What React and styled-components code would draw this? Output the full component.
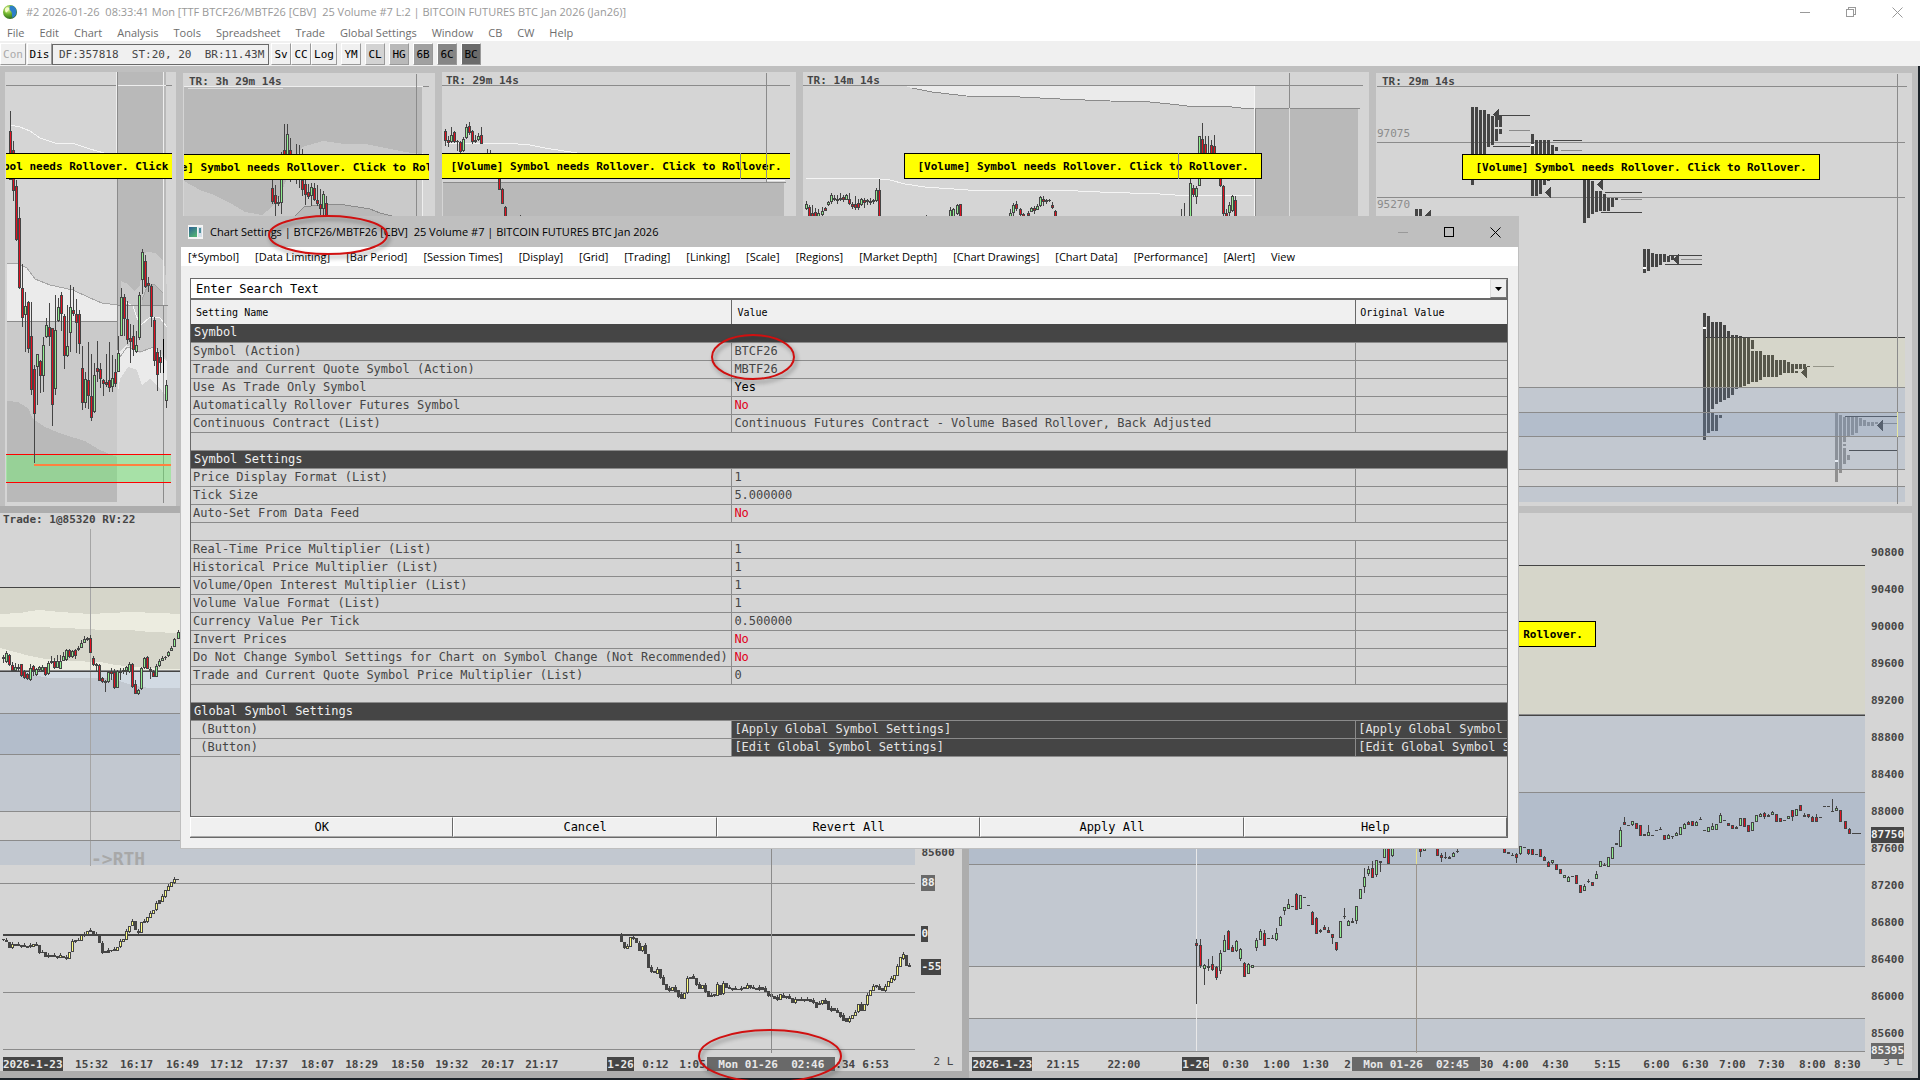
import React, { Fragment } from 'react'
import styled, { createGlobalStyle, css } from 'styled-components'

const colors = {
  panel: '#d5d5d5',
  frame: '#bfbfbf',
  frameActive: '#adadad',
  shade: '#b9b9b9',
  mid: '#cacaca',
  light: '#ebebeb',
  line: '#8b8b8b',
  ink: '#454545',
  tag: '#696969',
  face: '#f0f0f0',
  up: '#90ee90',
  down: '#e01020',
  study: '#ffff80',
  khaki: 'rgba(221, 221, 121, 0.12)',
  blue: 'rgba(118, 148, 188, 0.2)',
  blueDeep: 'rgba(120, 148, 187, 0.36)'
}

const sans = '"Open Sans", "Noto Sans", sans-serif'
const mono = '"DejaVu Sans Mono", "Liberation Mono", monospace'

const GlobalStyle = createGlobalStyle`
  * {
    box-sizing: border-box;
  }

  body {
    background: #1c2329;
    margin: 0;
    overflow: hidden;
  }

  button, input {
    border-radius: 0;
    margin: 0;
    padding: 0;
  }
`

const Page = styled.div`
  display: flex;
  flex-direction: column;
  font-family: ${mono};
  font-size: 12px;
  height: 100vh;
  position: relative;
`

const TitleBar = styled.header`
  align-items: center;
  background: white;
  color: #999;
  display: flex;
  flex: none;
  font-family: ${sans};
  height: 24px;
  padding-left: 2px;
  white-space: pre;
`

const Title = styled.h1`
  flex: 1;
  font-size: 11px;
  font-weight: normal;
  line-height: 16px;
  margin: 0 0 0 8px;
`

const WindowButton = styled.button`
  align-items: center;
  background: none;
  border: 0;
  color: ${props => props.$color || '#999'};
  display: flex;
  height: 20px;
  justify-content: center;
  width: 46px;
`

const Menu = styled.nav`
  align-items: center;
  background: white;
  display: flex;
  flex: none;
  gap: ${props => props.$gap}px;
  height: ${props => props.$height}px;
  padding-left: 7px;
`

const MenuItem = styled.button`
  background: none;
  border: 0;
  color: ${props => props.$color};
  font-family: ${sans};
  font-size: 11px;
  line-height: 16px;
  white-space: nowrap;
`

const Toolbar = styled.div`
  align-items: center;
  background: ${colors.face};
  display: flex;
  flex: none;
  height: 25px;
  padding-top: 1px;
`

const ToolButton = styled.button`
  background: ${props => props.$bg || colors.face};
  border: 1px solid;
  border-color: white #999 #999 white;
  color: black;
  flex: none;
  font-family: ${mono};
  font-size: 11px;
  height: 22px;
  margin-right: ${props => props.$gap || 0}px;
  text-align: center;
  width: ${props => props.$width}px;

  &:disabled {
    color: #aaa;
  }
`

const Status = styled.output`
  border: 1px solid ${colors.tag};
  color: ${colors.ink};
  font-size: 11px;
  height: 21px;
  line-height: 19px;
  margin-right: 2px;
  padding-left: 6px;
  white-space: pre;
  width: 217px;
`

const Workspace = styled.main`
  background: ${colors.frame};
  border-bottom: 2px solid #1c2329;
  border-right: 2px solid #1c2329;
  display: flex;
  flex: 1;
  flex-direction: column;
  min-height: 0;
  position: relative;
`

const TopRow = styled.div`
  display: flex;
  flex: 434 1 0;
  gap: 7px;
  min-height: 0;
  padding: 6px 6px 0 5px;
`

const BottomRow = styled.div`
  display: flex;
  flex: 572 1 0;
  min-height: 0;
`

const layered = css`
  display: grid;
  grid-template-columns: minmax(0, 1fr);
  grid-template-rows: minmax(0, 1fr);
  min-width: 0;
  overflow: hidden;

  > * {
    grid-area: 1 / 1;
  }
`

const ChartPanel = styled.section`
  ${layered}
  background: ${colors.panel};
  flex: ${props => props.$grow} 1 0;
  margin-top: ${props => (props.$inset ? 1 : 0)}px;
`

const Plot = styled.svg`
  display: block;
  height: 100%;
  min-height: 0;
  pointer-events: none;
  width: 100%;
`

const TimeRemaining = styled.div`
  align-self: start;
  color: ${colors.ink};
  font-size: 11px;
  font-weight: bold;
  line-height: 17px;
  padding-left: ${props => props.$pad}px;
  white-space: pre;
`

const BannerRow = styled.div`
  align-self: start;
  display: flex;
  justify-content: center;
  margin: ${props => props.$top}px ${props => props.$right}px 0 ${props => props.$left || 0}px;
  overflow: hidden;
`

const Banner = styled.button`
  background: #ff0;
  border: 1px solid black;
  color: black;
  flex: none;
  font-family: ${mono};
  font-size: 11px;
  font-weight: bold;
  height: 26px;
  padding: 0 12px;
  white-space: nowrap;
`

const Trading = styled.section`
  background: ${colors.panel};
  border-bottom: ${props => props.$bottom}px solid ${props => props.$frame};
  border-right: ${props => props.$side}px solid ${props => props.$frame};
  border-top: 7px solid ${props => props.$frame};
  display: grid;
  flex: ${props => props.$grow} 1 0;
  grid-template-columns: minmax(0, 1fr) 47px;
  grid-template-rows: minmax(0, 1fr) 14px;
  min-width: 0;
`

const PlotArea = styled.div`
  ${layered}
`

const PriceAxis = styled.div`
  color: ${colors.ink};
  display: flex;
  flex-direction: column;
  font-size: 11px;
  font-weight: bold;
  padding: 21px 0 5px 6px;
  position: relative;
`

const Price = styled.span`
  align-items: center;
  display: flex;
  flex: 1;
`

const AxisTag = styled.span`
  background: ${props => props.$bg};
  color: ${props => props.$color || '#f0f0f0'};
  font-size: 11px;
  font-weight: bold;
  left: 6px;
  line-height: 16px;
  position: absolute;
  top: ${props => props.$top}%;
`

const TimeAxis = styled.div`
  color: ${colors.ink};
  display: flex;
  font-size: 11px;
  font-weight: bold;
  line-height: 15px;
  padding-left: 3px;
`

const Slot = styled.span`
  flex: ${props => props.$grow} 1 0;
  min-width: 0;
  overflow: hidden;
  white-space: pre;
`

const DateTag = styled.span`
  background: ${colors.ink};
  color: #e8e8e8;
  display: inline-block;
`

const CursorTag = styled(Slot)`
  background: ${colors.tag};
  color: #e8e8e8;
  text-align: center;
`

const AxisCorner = styled.span`
  color: ${colors.ink};
  font-size: 11px;
  line-height: 10px;
  padding-right: 9px;
  text-align: right;
`

const Dialog = styled.section`
  background: ${colors.face};
  border: 1px solid ${colors.frame};
  display: flex;
  flex-direction: column;
  height: 633px;
  left: 180px;
  position: absolute;
  right: 399px;
  top: 150px;
`

const DialogTitle = styled.div`
  align-items: center;
  background: ${colors.frame};
  display: flex;
  flex: none;
  font-family: ${sans};
  height: 30px;
  padding-left: 7px;
`

const DialogName = styled.h2`
  flex: 1;
  font-size: 11px;
  font-weight: normal;
  line-height: 16px;
  margin: 0 0 0 7px;
  white-space: pre;
`

const DialogBody = styled.div`
  display: flex;
  flex: 1;
  flex-direction: column;
  min-height: 0;
  padding: 12px 10px 10px 9px;
`

const Search = styled.div`
  background: white;
  border: 1px solid ${colors.tag};
  display: flex;
  flex: none;
  height: 21px;
`

const SearchInput = styled.input`
  border: 0;
  color: black;
  flex: 1;
  font-family: ${mono};
  font-size: 12px;
  min-width: 0;
  outline: 0;
  padding-left: 5px;

  &::placeholder {
    color: black;
    opacity: 1;
  }
`

const DropButton = styled.button`
  align-items: center;
  background: ${colors.face};
  border: 1px solid;
  border-color: #ddd #777 #777 #ddd;
  display: flex;
  justify-content: center;
  width: 17px;
`

const TableFrame = styled.div`
  background: ${colors.panel};
  border: 1px solid ${colors.tag};
  flex: 1;
  min-height: 0;
  overflow: hidden;
`

const Table = styled.table`
  border-collapse: collapse;
  color: ${colors.ink};
  font-size: 12px;
  table-layout: fixed;
  width: 100%;
`

const HeadCell = styled.th`
  background: ${colors.face};
  border-right: 1px solid ${colors.tag};
  color: black;
  font-size: 10px;
  font-weight: normal;
  height: 24px;
  padding: 0 5px;
  text-align: left;
  width: ${props => props.$width};

  &:last-child {
    border-right: 0;
    padding-left: 4px;
  }
`

const Cell = styled.td`
  border: solid ${colors.line};
  border-width: 1px 1px 1px 0;
  color: ${props => props.$color || 'inherit'};
  height: 18px;
  line-height: 17px;
  overflow: hidden;
  padding: 0 0 0 2px;
  white-space: pre;

  &:last-child {
    border-right: 0;
  }

  ${props =>
    props.$dark &&
    css`
      background: ${colors.ink};
      color: #e4e4e4;
    `}
`

const SectionCell = styled.th`
  background: ${colors.ink};
  color: #f0f0f0;
  font-weight: normal;
  height: 18px;
  line-height: 17px;
  padding: 0 0 0 3px;
  text-align: left;
`

const CellButton = styled.button`
  background: none;
  border: 0;
  color: inherit;
  display: block;
  font-family: ${mono};
  font-size: 12px;
  line-height: 17px;
`

const Actions = styled.div`
  border-bottom: 1px solid ${colors.tag};
  border-right: 1px solid ${colors.tag};
  display: flex;
  flex: none;
  height: 21px;
`

const ActionButton = styled.button`
  background: ${colors.face};
  border: 1px solid;
  border-color: white ${colors.tag} #aaa white;
  color: black;
  flex: 1;
  font-family: ${mono};
  font-size: 12px;
`

const Marks = styled.svg`
  filter: drop-shadow(2px 3px 2px rgba(0, 0, 0, 0.4));
  height: 100%;
  inset: 0;
  overflow: hidden;
  pointer-events: none;
  position: absolute;
  width: 100%;
`

const ProfilePrices = styled.div`
  align-self: start;
  color: ${colors.line};
  display: grid;
  font-size: 11px;
  gap: 55px;
  line-height: 16px;
  padding: 53px 0 0 1px;
`

const TradeInfo = styled(TimeRemaining)`
  line-height: 14px;
  padding-left: 3px;
`

const Watermark = styled.span`
  align-self: end;
  color: #a8a8a8;
  font-size: 18px;
  font-weight: bold;
  line-height: 18px;
  margin: 0 0 189px 91px;
`

const Candle = ({ x, hi, top, bot, lo, fill }) => (
  <g>
    <rect x={x} y={hi} width='1' height={Math.max(lo - hi, 1)} fill={colors.ink} />
    <rect x={x - 1} y={top} width='3' height={Math.max(bot - top, 1)} fill={colors.ink} />
    {bot - top > 2 && <rect x={x} y={top + 1} width='1' height={bot - top - 2} fill={fill} />}
  </g>
)

// rows are [x, high, body top, body bottom, low, rising]
const Candles = ({ data }) =>
  data.map(([x, hi, top, bot, lo, rising]) => (
    <Candle
      key={x}
      x={x}
      hi={hi}
      top={top}
      bot={bot}
      lo={lo}
      fill={rising ? colors.up : colors.down}
    />
  ))

// rows are [x, top, bottom, rising]
const StudyBars = ({ data }) =>
  data.map(([x, top, bot, rising], i) => (
    <Candle
      key={x}
      x={x}
      hi={i % 2 ? top - 2 : top}
      top={top}
      bot={bot}
      lo={i % 3 ? bot : bot + 1}
      fill={rising ? colors.study : colors.ink}
    />
  ))

// rows are [x, top, bottom]
const Profile = ({ data, fill = colors.ink }) =>
  data.map(([x, top, bot]) => (
    <rect key={x + '-' + top} x={x} y={top} width='3' height={bot - top} fill={fill} />
  ))

const Arrow = ({ x, y, fill = colors.ink }) => (
  <path d={`M${x} ${y}l6 -7v13z`} fill={fill} />
)

const Rule = ({ y, from, to, color = colors.line, weight = 1 }) => (
  <rect x={from} y={y} width={to - from} height={weight} fill={color} />
)

const Cross = ({ x, from, to, color = colors.line }) => (
  <rect x={x} y={from} width='1' height={to - from} fill={color} />
)

const Band = ({ x, y, width, height, fill }) => (
  <rect x={x} y={y} width={width} height={height} fill={fill} />
)

const Drawing = ({ box, children }) => (
  <Plot viewBox={box} preserveAspectRatio='none' shapeRendering='crispEdges' aria-hidden='true'>
    {children}
  </Plot>
)

const dailyCandles = [
  [10, 111, 131, 180, 180, 0], [13, 141, 150, 191, 201, 0], [16, 180, 186, 240, 241, 0],
  [19, 207, 218, 288, 289, 0], [22, 264, 288, 318, 327, 0], [25, 292, 306, 315, 352, 1],
  [28, 301, 302, 349, 353, 0], [31, 302, 336, 390, 395, 0], [34, 365, 369, 414, 463, 0],
  [37, 354, 354, 367, 405, 1], [40, 360, 361, 376, 393, 0], [43, 337, 345, 376, 392, 1],
  [46, 318, 325, 337, 338, 1], [49, 303, 327, 337, 346, 0], [52, 328, 328, 405, 426, 0],
  [55, 295, 330, 389, 395, 1], [58, 298, 307, 321, 322, 1], [61, 292, 295, 314, 331, 0],
  [64, 314, 316, 356, 369, 0], [67, 305, 346, 356, 357, 1], [70, 285, 307, 333, 352, 1],
  [73, 287, 310, 314, 316, 0], [76, 299, 314, 323, 353, 0], [79, 310, 314, 344, 354, 0],
  [82, 346, 368, 403, 410, 0], [85, 372, 379, 403, 408, 1], [88, 342, 380, 396, 409, 0],
  [91, 354, 396, 418, 421, 0], [94, 363, 375, 412, 413, 1], [97, 341, 368, 372, 382, 0],
  [100, 363, 369, 379, 388, 0], [103, 379, 380, 384, 396, 0], [106, 354, 382, 385, 387, 0],
  [109, 342, 380, 388, 392, 0], [112, 355, 378, 387, 392, 1], [115, 359, 372, 384, 387, 0],
  [118, 336, 353, 372, 372, 1], [121, 288, 297, 336, 336, 1], [124, 294, 297, 319, 336, 0],
  [127, 301, 319, 340, 344, 0], [130, 324, 338, 342, 363, 0], [133, 325, 336, 350, 356, 0],
  [136, 331, 345, 352, 353, 1], [139, 292, 295, 338, 340, 1], [142, 249, 252, 280, 294, 1],
  [145, 255, 261, 287, 288, 0], [148, 277, 283, 286, 292, 0], [151, 284, 286, 317, 327, 0],
  [154, 317, 320, 361, 366, 0], [157, 348, 352, 375, 391, 0], [160, 350, 357, 363, 373, 0],
  [166, 380, 385, 401, 408, 1]
]

const fourHourCandles = [
  [272, 180, 188, 202, 204, 0], [275, 185, 195, 204, 216, 0], [278, 196, 202, 204, 206, 0],
  [281, 152, 160, 203, 214, 1], [284, 124, 150, 180, 180, 0], [287, 124, 134, 160, 180, 1],
  [290, 138, 150, 170, 182, 0], [296, 144, 156, 160, 184, 0], [299, 145, 156, 180, 188, 1],
  [302, 149, 180, 190, 196, 0], [305, 180, 184, 195, 205, 0], [308, 184, 192, 197, 199, 0],
  [311, 183, 187, 196, 206, 1], [314, 183, 188, 200, 201, 0], [317, 185, 200, 204, 206, 0],
  [320, 189, 204, 209, 215, 0], [323, 191, 194, 209, 216, 1], [326, 196, 203, 217, 217, 0]
]

const halfHourCandles = [
  [445, 129, 131, 141, 146, 0], [448, 136, 140, 143, 147, 0], [451, 127, 135, 142, 143, 1],
  [454, 131, 132, 142, 143, 0], [457, 140, 141, 142, 151, 0], [460, 141, 142, 152, 154, 0],
  [463, 137, 139, 151, 152, 1], [466, 124, 127, 138, 139, 1], [469, 122, 126, 133, 135, 0],
  [472, 130, 131, 142, 144, 0], [475, 135, 140, 142, 143, 0], [478, 133, 136, 140, 141, 1],
  [481, 127, 135, 144, 144, 0], [487, 149, 154, 158, 160, 0], [490, 150, 154, 160, 160, 0],
  [499, 175, 178, 190, 190, 0], [502, 188, 189, 204, 204, 0], [505, 206, 207, 217, 217, 0],
  [520, 215, 216, 217, 217, 0]
]

const quarterCandles = [
  [806, 201, 204, 209, 210, 1], [809, 205, 207, 217, 217, 0], [812, 205, 213, 217, 217, 0],
  [815, 208, 212, 217, 217, 0], [818, 209, 213, 217, 217, 1], [822, 207, 211, 215, 216, 1],
  [825, 207, 208, 211, 211, 0], [828, 201, 202, 205, 206, 1], [831, 193, 195, 202, 204, 1],
  [834, 195, 198, 200, 201, 0], [837, 195, 199, 201, 204, 1], [840, 193, 198, 200, 201, 0],
  [843, 195, 197, 200, 202, 0], [846, 194, 195, 200, 200, 1], [849, 193, 199, 204, 205, 0],
  [852, 202, 204, 207, 209, 0], [855, 196, 204, 208, 210, 0], [858, 199, 203, 208, 210, 0],
  [861, 198, 199, 205, 206, 1], [864, 198, 200, 203, 208, 0], [867, 199, 200, 202, 205, 1],
  [870, 198, 201, 203, 205, 0], [873, 199, 200, 202, 204, 1], [876, 188, 190, 201, 202, 1],
  [879, 179, 190, 217, 217, 0], [926, 215, 216, 217, 217, 0], [950, 207, 210, 217, 217, 1],
  [953, 208, 209, 217, 217, 1], [957, 204, 205, 214, 215, 1], [960, 204, 204, 217, 217, 0],
  [1010, 209, 213, 217, 217, 1], [1013, 203, 205, 213, 217, 1], [1016, 201, 204, 209, 211, 0],
  [1020, 208, 209, 215, 217, 0], [1023, 213, 214, 217, 217, 0], [1028, 211, 213, 216, 217, 0],
  [1031, 207, 208, 212, 212, 1], [1034, 206, 208, 211, 214, 0], [1037, 204, 206, 210, 210, 1],
  [1040, 196, 197, 206, 207, 1], [1043, 196, 199, 202, 206, 0], [1046, 199, 200, 202, 204, 1],
  [1049, 199, 200, 201, 202, 0], [1052, 202, 205, 208, 209, 0], [1055, 210, 211, 217, 217, 0],
  [1181, 209, 217, 217, 217, 0], [1184, 203, 217, 217, 217, 0], [1190, 175, 183, 217, 217, 1],
  [1193, 185, 188, 195, 197, 0], [1196, 186, 188, 197, 204, 1], [1199, 136, 136, 186, 186, 1],
  [1202, 123, 139, 160, 162, 0], [1205, 136, 144, 160, 162, 0], [1208, 136, 153, 160, 164, 1],
  [1211, 140, 145, 156, 160, 0], [1214, 135, 146, 160, 164, 0], [1220, 175, 178, 186, 187, 0],
  [1223, 185, 186, 214, 217, 0], [1226, 209, 213, 217, 217, 0], [1229, 202, 205, 213, 217, 1],
  [1232, 195, 196, 211, 212, 1], [1235, 196, 200, 217, 217, 0]
]

const profiles = [
  [1471, 107, 185], [1475, 107, 154], [1479, 110, 154], [1483, 110, 154], [1487, 114, 147],
  [1491, 116, 145], [1495, 117, 127], [1495, 129, 141], [1499, 115, 127], [1499, 129, 134],
  [1531, 134, 196], [1535, 140, 196], [1539, 140, 194], [1543, 140, 185], [1547, 140, 181],
  [1551, 145, 155], [1555, 147, 151], [1583, 180, 223], [1587, 180, 218], [1591, 181, 214],
  [1595, 191, 212], [1599, 191, 211], [1603, 194, 211], [1607, 198, 211], [1611, 198, 207],
  [1615, 198, 200], [1415, 209, 217], [1419, 209, 217], [1643, 249, 273], [1647, 249, 271],
  [1651, 253, 267], [1655, 254, 267], [1659, 254, 265], [1663, 254, 262], [1667, 256, 262],
  [1671, 256, 260], [1703, 313, 440], [1707, 316, 433], [1711, 322, 409], [1711, 413, 431],
  [1715, 322, 404], [1715, 415, 431], [1719, 322, 402], [1719, 415, 418], [1723, 325, 400],
  [1727, 331, 398], [1731, 335, 395], [1735, 335, 389], [1739, 336, 387], [1743, 337, 386],
  [1747, 337, 384], [1751, 340, 349], [1751, 351, 382], [1755, 351, 382], [1759, 351, 380],
  [1763, 355, 377], [1767, 355, 377], [1771, 355, 377], [1775, 360, 377], [1779, 360, 375],
  [1783, 360, 373], [1787, 362, 373], [1791, 364, 373], [1795, 364, 369], [1795, 371, 373],
  [1799, 364, 369], [1803, 364, 369], [1807, 366, 367]
]

const todayProfile = [
  [1835, 412, 482], [1839, 415, 473], [1843, 417, 442], [1843, 444, 446], [1843, 448, 464],
  [1847, 417, 436], [1847, 455, 460], [1851, 417, 435], [1855, 417, 433], [1859, 418, 426],
  [1863, 420, 426], [1867, 422, 426], [1871, 422, 426], [1875, 422, 424]
]

const volumeCandles = [
  [3, 655, 657, 659, 663, 0], [6, 651, 653, 662, 663, 1], [9, 654, 655, 665, 666, 0],
  [12, 662, 665, 671, 672, 0], [15, 663, 667, 671, 672, 1], [18, 664, 667, 669, 672, 0],
  [21, 664, 664, 676, 677, 0], [24, 670, 671, 678, 679, 0], [27, 673, 674, 679, 680, 0],
  [30, 664, 668, 680, 681, 1], [33, 665, 666, 671, 676, 0], [36, 668, 669, 675, 676, 1],
  [39, 666, 667, 670, 671, 1], [42, 665, 667, 671, 672, 1], [45, 667, 667, 675, 676, 0],
  [48, 661, 663, 674, 675, 1], [51, 656, 661, 663, 664, 1], [54, 658, 661, 668, 669, 0],
  [57, 655, 661, 668, 668, 1], [60, 655, 661, 669, 669, 1], [63, 652, 656, 661, 661, 1],
  [66, 649, 650, 660, 661, 1], [69, 649, 650, 657, 658, 0], [72, 650, 651, 657, 658, 1],
  [75, 649, 650, 656, 659, 0], [78, 646, 648, 650, 651, 0], [81, 640, 643, 648, 648, 1],
  [84, 636, 639, 643, 643, 1], [87, 637, 638, 640, 641, 0], [90, 635, 638, 653, 653, 0],
  [93, 656, 658, 665, 666, 0], [96, 663, 664, 666, 671, 1], [99, 664, 665, 681, 681, 0],
  [102, 677, 678, 682, 683, 0], [105, 680, 681, 683, 692, 0], [108, 671, 672, 682, 683, 1],
  [111, 668, 671, 674, 680, 0], [114, 669, 672, 688, 689, 0], [117, 670, 671, 688, 688, 1],
  [120, 668, 671, 673, 680, 1], [123, 668, 670, 671, 674, 0], [126, 666, 667, 671, 675, 1],
  [129, 662, 664, 672, 673, 1], [132, 663, 664, 687, 688, 0], [135, 680, 684, 694, 694, 0],
  [138, 689, 690, 694, 695, 1], [141, 667, 668, 689, 690, 1], [144, 657, 658, 668, 669, 1],
  [147, 656, 657, 669, 669, 0], [150, 667, 669, 671, 679, 0], [153, 670, 672, 677, 677, 0],
  [156, 664, 666, 677, 677, 1], [159, 659, 661, 666, 667, 1], [162, 656, 658, 661, 661, 1],
  [165, 656, 657, 658, 660, 1], [168, 651, 652, 656, 657, 1], [171, 646, 648, 651, 651, 1],
  [174, 638, 639, 647, 647, 1], [178, 630, 632, 639, 639, 1]
]

const studyBars = [
  [3, 939, 940, 0], [6, 940, 942, 0], [9, 942, 948, 0], [12, 944, 948, 1], [15, 944, 946, 0],
  [18, 944, 946, 1], [21, 945, 947, 0], [24, 945, 947, 0], [27, 946, 948, 0], [30, 945, 947, 1],
  [33, 944, 947, 1], [36, 944, 946, 0], [39, 945, 953, 0], [42, 952, 953, 0], [45, 952, 957, 0],
  [48, 955, 957, 0], [51, 955, 957, 0], [54, 955, 957, 1], [57, 956, 958, 0], [60, 955, 958, 1],
  [63, 956, 958, 0], [66, 957, 959, 0], [69, 952, 959, 1], [72, 941, 952, 1], [75, 940, 942, 0],
  [78, 940, 941, 0], [81, 935, 941, 1], [84, 934, 936, 0], [87, 931, 935, 1], [90, 930, 932, 0],
  [93, 931, 935, 0], [96, 934, 936, 0], [99, 936, 943, 0], [102, 943, 953, 0], [105, 951, 953, 0],
  [108, 950, 953, 0], [111, 950, 951, 0], [114, 949, 951, 0], [117, 947, 951, 1],
  [120, 941, 947, 1], [123, 939, 942, 1], [126, 931, 940, 1], [129, 926, 932, 1],
  [132, 921, 926, 1], [135, 921, 930, 0], [138, 931, 933, 0], [141, 922, 933, 1],
  [144, 921, 923, 0], [147, 917, 922, 1], [150, 913, 918, 1], [153, 910, 914, 1],
  [156, 903, 910, 1], [159, 900, 904, 0], [162, 896, 902, 1], [165, 890, 897, 1],
  [168, 886, 891, 1], [171, 882, 887, 1], [174, 879, 883, 1], [177, 879, 880, 0],
  [621, 935, 942, 0], [624, 942, 948, 0], [627, 946, 949, 1], [630, 937, 947, 1],
  [633, 937, 939, 0], [636, 938, 943, 0], [639, 943, 951, 0], [642, 946, 951, 1],
  [645, 945, 954, 0], [648, 954, 968, 0], [651, 967, 972, 0], [654, 971, 973, 0],
  [657, 969, 974, 1], [660, 969, 978, 0], [663, 977, 985, 0], [666, 984, 990, 0],
  [669, 988, 991, 0], [672, 987, 991, 1], [675, 987, 992, 0], [678, 990, 997, 0],
  [681, 994, 999, 0], [684, 993, 999, 1], [687, 978, 993, 1], [690, 977, 979, 0],
  [693, 976, 979, 0], [696, 978, 985, 0], [699, 984, 989, 0], [702, 985, 989, 1],
  [705, 985, 992, 0], [708, 991, 997, 0], [711, 995, 997, 0], [714, 994, 996, 0],
  [717, 984, 996, 1], [720, 985, 995, 0], [723, 983, 994, 1], [726, 983, 988, 0],
  [729, 987, 989, 0], [732, 988, 990, 0], [735, 988, 990, 0], [738, 989, 990, 0],
  [741, 988, 990, 0], [744, 987, 989, 0], [747, 985, 989, 1], [750, 985, 988, 0],
  [753, 987, 989, 0], [756, 988, 990, 0], [759, 987, 990, 0], [762, 987, 990, 0],
  [765, 988, 992, 0], [768, 991, 996, 0], [771, 994, 997, 0], [774, 996, 999, 0],
  [777, 997, 1000, 0], [780, 994, 1000, 1], [783, 995, 998, 0], [786, 996, 998, 0],
  [789, 996, 999, 0], [792, 998, 1003, 0], [795, 999, 1003, 1], [798, 999, 1001, 0],
  [801, 999, 1001, 0], [804, 999, 1001, 0], [807, 999, 1001, 0], [810, 999, 1002, 0],
  [813, 1000, 1003, 0], [816, 1002, 1008, 0], [819, 1003, 1005, 0], [822, 1000, 1004, 1],
  [825, 1000, 1004, 0], [828, 1001, 1010, 0], [831, 1008, 1011, 0], [834, 1008, 1011, 0],
  [837, 1010, 1013, 0], [840, 1012, 1017, 0], [843, 1015, 1021, 0], [846, 1018, 1022, 0],
  [849, 1018, 1022, 1], [852, 1015, 1019, 1], [855, 1012, 1016, 1], [858, 1004, 1012, 1],
  [861, 1004, 1011, 0], [864, 1004, 1011, 1], [867, 995, 1005, 1], [870, 990, 996, 1],
  [873, 986, 991, 1], [876, 985, 987, 0], [879, 986, 990, 0], [882, 988, 991, 0],
  [885, 986, 991, 1], [888, 981, 987, 1], [891, 978, 983, 1], [894, 975, 980, 1],
  [897, 966, 976, 1], [900, 957, 967, 1], [903, 954, 959, 1], [906, 955, 966, 0],
  [909, 965, 967, 0]
]

const hourlyCandles = [
  [1196, 939, 943, 946, 1004, 0], [1200, 939, 945, 966, 968, 0], [1204, 964, 965, 969, 985, 1],
  [1208, 959, 966, 968, 971, 1], [1212, 956, 964, 970, 971, 0], [1216, 966, 967, 978, 980, 0],
  [1220, 950, 953, 971, 974, 1], [1224, 935, 940, 952, 952, 1], [1228, 930, 931, 950, 950, 0],
  [1232, 945, 947, 952, 952, 0], [1236, 940, 941, 951, 952, 1], [1240, 948, 949, 959, 961, 1],
  [1244, 962, 963, 977, 977, 0], [1248, 963, 964, 974, 974, 1], [1252, 965, 965, 968, 968, 1],
  [1256, 938, 940, 948, 951, 1], [1260, 929, 931, 940, 940, 1], [1264, 930, 933, 946, 946, 0],
  [1268, 938, 938, 939, 939, 0], [1272, 935, 938, 939, 939, 0], [1276, 928, 933, 940, 941, 1],
  [1280, 916, 917, 926, 926, 1], [1284, 907, 907, 911, 915, 1], [1288, 899, 904, 909, 909, 1],
  [1292, 906, 906, 907, 907, 0], [1296, 893, 894, 910, 910, 0], [1300, 895, 895, 909, 909, 1],
  [1304, 897, 897, 898, 898, 0], [1308, 905, 905, 906, 906, 0], [1312, 911, 912, 925, 925, 0],
  [1316, 917, 918, 934, 934, 0], [1320, 929, 930, 932, 933, 0], [1324, 925, 927, 930, 930, 0],
  [1328, 927, 930, 933, 933, 0], [1332, 934, 934, 938, 944, 0], [1336, 942, 942, 950, 951, 0],
  [1340, 921, 921, 938, 938, 1], [1344, 908, 916, 917, 919, 0], [1348, 920, 921, 926, 926, 1],
  [1352, 918, 921, 923, 923, 0], [1356, 906, 906, 921, 924, 1], [1360, 889, 889, 899, 899, 1],
  [1364, 868, 877, 887, 893, 1], [1368, 866, 869, 874, 876, 1], [1372, 861, 868, 878, 878, 0],
  [1376, 860, 860, 875, 877, 1], [1380, 861, 861, 863, 872, 0], [1384, 848, 848, 858, 858, 1],
  [1388, 848, 848, 864, 864, 0], [1392, 848, 848, 856, 857, 1], [1420, 848, 848, 852, 857, 0],
  [1424, 848, 848, 851, 851, 1], [1437, 848, 848, 856, 856, 0], [1441, 853, 855, 858, 862, 0],
  [1445, 852, 857, 858, 859, 0], [1449, 856, 857, 859, 859, 0], [1453, 852, 853, 857, 857, 1],
  [1457, 848, 851, 852, 853, 0], [1461, 848, 848, 849, 849, 0], [1504, 848, 848, 853, 853, 0],
  [1508, 852, 852, 854, 854, 0], [1512, 853, 855, 856, 856, 0], [1516, 853, 854, 858, 863, 0],
  [1520, 846, 846, 854, 855, 1], [1524, 847, 847, 848, 848, 0], [1528, 849, 849, 854, 855, 0],
  [1532, 849, 849, 855, 855, 0], [1536, 854, 854, 855, 855, 0], [1540, 849, 849, 857, 857, 0],
  [1544, 856, 857, 861, 861, 0], [1548, 861, 862, 867, 867, 0], [1552, 860, 860, 863, 864, 1],
  [1556, 864, 864, 870, 870, 0], [1560, 869, 869, 874, 874, 0], [1564, 875, 875, 878, 878, 1],
  [1568, 876, 877, 882, 882, 1], [1572, 876, 876, 877, 877, 0], [1576, 875, 875, 884, 884, 0],
  [1580, 885, 885, 893, 893, 0], [1584, 884, 886, 891, 891, 1], [1588, 879, 881, 882, 883, 0],
  [1592, 882, 882, 886, 886, 0], [1596, 871, 874, 879, 879, 1], [1600, 861, 861, 867, 867, 1],
  [1604, 863, 865, 866, 866, 0], [1608, 857, 857, 867, 867, 1], [1612, 847, 847, 859, 859, 1],
  [1616, 843, 843, 845, 845, 0], [1620, 827, 830, 847, 847, 1], [1624, 817, 822, 825, 825, 0],
  [1628, 825, 825, 826, 826, 0], [1632, 821, 821, 825, 826, 1], [1636, 823, 823, 829, 829, 0],
  [1640, 825, 825, 836, 836, 0], [1644, 834, 834, 836, 836, 0], [1648, 825, 832, 836, 836, 1],
  [1652, 835, 835, 836, 836, 0], [1656, 830, 830, 831, 831, 0], [1660, 827, 829, 830, 830, 0],
  [1664, 835, 835, 840, 840, 0], [1668, 834, 835, 839, 839, 1], [1672, 836, 836, 837, 839, 0],
  [1676, 832, 833, 836, 836, 1], [1680, 827, 827, 835, 835, 1], [1684, 823, 824, 829, 829, 1],
  [1688, 821, 822, 825, 825, 0], [1692, 821, 821, 826, 826, 0], [1696, 821, 822, 826, 826, 1],
  [1700, 817, 819, 820, 820, 0], [1704, 830, 830, 831, 831, 0], [1708, 827, 827, 832, 832, 1],
  [1712, 823, 826, 830, 830, 1], [1716, 824, 824, 830, 830, 1], [1720, 813, 815, 823, 823, 1],
  [1724, 820, 820, 821, 821, 0], [1728, 823, 823, 826, 826, 0], [1732, 825, 825, 829, 829, 0],
  [1736, 826, 827, 829, 829, 1], [1740, 818, 818, 826, 826, 1], [1744, 818, 818, 827, 827, 0],
  [1748, 825, 825, 832, 832, 0], [1752, 822, 822, 831, 831, 1], [1756, 815, 815, 822, 822, 1],
  [1760, 813, 814, 817, 817, 1], [1764, 812, 813, 817, 819, 0], [1768, 814, 815, 817, 817, 0],
  [1772, 811, 812, 815, 815, 1], [1776, 814, 814, 822, 822, 0], [1780, 818, 818, 822, 822, 0],
  [1784, 820, 820, 821, 821, 0], [1788, 816, 816, 819, 819, 1], [1792, 810, 810, 817, 821, 0],
  [1796, 809, 809, 816, 816, 1], [1800, 805, 805, 811, 811, 0], [1804, 813, 815, 817, 817, 0],
  [1808, 814, 814, 817, 818, 0], [1812, 816, 817, 822, 822, 0], [1816, 814, 817, 822, 822, 0],
  [1820, 817, 817, 818, 818, 0], [1824, 806, 806, 807, 807, 0], [1828, 806, 806, 807, 807, 0],
  [1832, 799, 811, 812, 812, 0], [1836, 806, 808, 811, 811, 1], [1840, 810, 810, 822, 822, 0],
  [1845, 821, 821, 829, 829, 0], [1849, 828, 829, 834, 834, 0]
]

const DailyChart = () => (
  <Drawing box='5 72 171 434'>
    <Band x={118} y={72} width={48} height={233} fill={colors.shade} />
    <path d='M121 305V281L128 284L134 291L140 286L143 254L147 252L156 253L164 262L167 288V305z' fill={colors.mid} />
    <path d='M7 263H17L27 268L35 279L50 285L73 290L90 298L102 303L117 305V321H7z' fill={colors.light} />
    <path d='M7 321H117V457L100 450L85 441L62 434L45 427L33 419L28 408L18 402L7 401z' fill={colors.mid} />
    <path d='M7 401L18 402L28 408L33 419L45 427L62 434L85 441L100 450L117 457V502H7z' fill={colors.shade} />
    <path d='M118 305H167V360L155 348L142 352L130 345L118 352z' fill={colors.mid} />
    <path d='M118 353L126 345L140 353L154 346L163 358L167 361V397L158 386L150 379L142 385L137 370L128 367L120 379L118 392z' fill={colors.light} />
    <path d='M142 305V300L147 287L154 284L163 292V305z' fill={colors.shade} />
    <path d='M7 263H17L27 268L35 279L50 285L73 290L90 298L102 303L117 305' fill='none' stroke='#a5a5a5' />
    <path d='M142 300L147 287L154 284L164 294M120 357L127 347L140 352L154 347' fill='none' stroke='#a5a5a5' />
    <path d='M10 125L20 127L30 131L40 138L55 143L75 144L90 149L104 153M120 300L133 306L140 326L150 317L160 318L167 327' fill='none' stroke='#f5f5f5' />
    <Rule y={85} from={6} to={172} />
    <Rule y={85} from={117} to={166} color='#eee' />
    <Rule y={305} from={117} to={168} />
    <Rule y={321} from={7} to={118} />
    <Cross x={116} from={72} to={153} color='#eee' />
    <Cross x={117} from={72} to={350} />
    <Cross x={163} from={72} to={305} color='#eee' />
    <Cross x={163} from={305} to={503} />
    <Band x={6} y={454} width={165} height={29} fill='rgba(110, 240, 110, 0.45)' />
    <Rule y={454} from={6} to={171} color='red' />
    <Rule y={482} from={6} to={171} color='red' />
    <Candles data={dailyCandles} />
    <Cross x={163} from={339} to={373} color='black' />
    <Rule y={464} from={34} to={171} color='#ff8040' weight={2} />
  </Drawing>
)

const FourHourChart = () => (
  <Drawing box='183 73 252 433'>
    <Band x={184} y={87} width={238} height={130} fill={colors.shade} />
    <path d='M184 181L200 190L214 195L232 204L245 212L262 215L272 207L280 196L292 165L302 147L323 141L345 144L365 144L385 148L405 152L422 154V217H184z' fill={colors.mid} />
    <path d='M294 217L299 212L304 207L326 204L345 205L370 209L380 213L392 217z' fill={colors.shade} />
    <path d='M294 217L299 212L304 207L326 204L345 205L370 209L380 213L392 216' fill='none' stroke={colors.line} />
    <Rule y={86} from={184} to={423} color='#eee' />
    <Rule y={86} from={423} to={429} />
    <Rule y={88} from={188} to={283} color='#ddd' />
    <Candles data={fourHourCandles} />
    <Cross x={416} from={74} to={217} />
    <Cross x={422} from={153} to={217} color='#eee' />
  </Drawing>
)

const HalfHourChart = () => (
  <Drawing box='442 72 354 434'>
    <Band x={443} y={183} width={341} height={34} fill={colors.shade} />
    <path d='M446 143H505L530 145L545 148L577 153M766 180H785' fill='none' stroke='#f5f5f5' />
    <Rule y={85} from={442} to={790} />
    <Rule y={182} from={443} to={786} />
    <Candles data={halfHourCandles} />
  </Drawing>
)

const QuarterChart = () => (
  <Drawing box='803 72 566 434'>
    <path d='M905 86L912 88L932 92L966 96L1020 97L1060 99L1110 101L1150 102L1170 104L1196 107L1222 106L1241 108H1254V86z' fill={colors.light} />
    <path d='M912 88L932 92L966 96L1020 97L1060 99L1110 101L1150 102L1170 104L1196 107L1222 106L1241 108H1254' fill='none' stroke={colors.line} />
    <Band x={1256} y={109} width={102} height={108} fill={colors.shade} />
    <path d='M806 178H870L890 180L905 184L925 187L968 190H1055L1100 192L1160 194L1190 196L1210 195H1252' fill='none' stroke='#f5f5f5' />
    <Rule y={85} from={803} to={1363} />
    <Rule y={108} from={1254} to={1360} />
    <Cross x={1254} from={86} to={217} color='#f5f5f5' />
    <Cross x={1255} from={108} to={217} />
    <Candles data={quarterCandles} />
    <Cross x={1289} from={108} to={217} color='#ddd' />
  </Drawing>
)

const ProfileChart = () => (
  <Drawing box='1376 73 536 433'>
    <Rule y={86} from={1377} to={1907} />
    <Rule y={142} from={1377} to={1905} />
    <Rule y={197} from={1377} to={1905} />
    <Profile data={profiles} />
    <Profile data={todayProfile} fill='#909090' />
    <Arrow x={1493} y={115} />
    <Arrow x={1545} y={193} />
    <Arrow x={1597} y={185} />
    <Arrow x={1425} y={216} />
    <Arrow x={1673} y={260} />
    <Arrow x={1801} y={373} />
    <Arrow x={1877} y={426} />
    <Rule y={144} from={1531} to={1534} color='white' weight={2} />
    <Rule y={267} from={1643} to={1646} color='white' weight={2} />
    <Rule y={327} from={1703} to={1706} color='white' weight={2} />
    <Rule y={460} from={1835} to={1838} color='white' weight={2} />
    <Rule y={115} from={1500} to={1530} color={colors.ink} />
    <Rule y={130} from={1509} to={1530} />
    <Rule y={146} from={1493} to={1530} color={colors.ink} />
    <Rule y={140} from={1553} to={1582} color={colors.ink} />
    <Rule y={150} from={1561} to={1582} />
    <Rule y={192} from={1605} to={1642} color={colors.ink} />
    <Rule y={199} from={1621} to={1642} />
    <Rule y={212} from={1601} to={1642} color={colors.ink} />
    <Rule y={255} from={1669} to={1702} color={colors.ink} />
    <Rule y={259} from={1681} to={1702} />
    <Rule y={264} from={1665} to={1702} color={colors.ink} />
    <Rule y={366} from={1813} to={1834} />
    <Rule y={416} from={1845} to={1898} color={colors.ink} />
    <Rule y={423} from={1883} to={1897} />
    <Rule y={450} from={1849} to={1898} color={colors.ink} />
    <Band x={1706} y={337} width={199} height={50} fill={colors.khaki} />
    <Band x={1376} y={387} width={529} height={25} fill={colors.blue} />
    <Band x={1376} y={412} width={529} height={24} fill={colors.blueDeep} />
    <Band x={1376} y={436} width={529} height={33} fill={colors.blue} />
    <Band x={1376} y={486} width={529} height={16} fill={colors.blue} />
    <Rule y={337} from={1706} to={1905} color={colors.ink} />
    {[387, 412, 436, 469, 486].map(y => (
      <Rule key={y} y={y} from={1376} to={1905} />
    ))}
    <Cross x={1897} from={74} to={504} />
    <Cross x={1897} from={412} to={437} color='#e6e6a0' />
  </Drawing>
)

const VolumeChart = () => (
  <Drawing box='0 513 915 544'>
    <Band x={0} y={587} width={915} height={84} fill={colors.khaki} />
    <path d='M0 614L20 613L30 611L40 610L60 612L90 614L130 612L160 613L180 614V633L150 632L130 630L100 630L90 629L60 628L40 627H0z' fill='#ecece0' />
    <path d='M0 648L15 652L30 656L45 659L70 661L100 662L115 665L140 667L160 669H180V671H0z' fill='#ecece0' />
    <Band x={0} y={671} width={915} height={42} fill={colors.blue} />
    <path d='M20 672H180V688H150L135 686L125 683L110 678H50L38 676z' fill='#d2dae3' />
    <Band x={0} y={713} width={915} height={41} fill={colors.blueDeep} />
    <Band x={0} y={754} width={915} height={57} fill={colors.blue} />
    <Band x={0} y={840} width={915} height={25} fill={colors.blue} />
    <Cross x={90} from={529} to={866} color='#a5a5a5' />
    <Rule y={587} from={0} to={915} color={colors.ink} />
    {[670, 713, 754, 811, 840, 883].map(y => (
      <Rule key={y} y={y} from={0} to={915} />
    ))}
    <Rule y={671} from={0} to={915} color={colors.ink} />
    <Rule y={992} from={3} to={915} />
    <Rule y={1049} from={3} to={915} />
    <Candles data={volumeCandles} />
    <Rule y={934} from={3} to={915} color={colors.ink} weight={2} />
    <StudyBars data={studyBars} />
    <Cross x={771} from={848} to={1053} />
  </Drawing>
)

const HourlyChart = () => (
  <Drawing box='969 513 896 544'>
    <Band x={969} y={565} width={896} height={149} fill={colors.khaki} />
    <Band x={969} y={715} width={896} height={77} fill={colors.blue} />
    <Band x={969} y={792} width={896} height={72} fill={colors.blueDeep} />
    <Band x={969} y={864} width={896} height={102} fill={colors.blue} />
    <Band x={969} y={1018} width={896} height={33} fill={colors.blue} />
    <Rule y={565} from={969} to={1865} color={colors.ink} />
    {[714, 792, 864, 966, 1018, 1051].map(y => (
      <Rule key={y} y={y} from={969} to={1865} />
    ))}
    <Rule y={715} from={969} to={1865} color={colors.ink} />
    <Cross x={1196} from={520} to={1051} color='#e8e8e8' />
    <Cross x={1416} from={520} to={864} color='#e6e08c' />
    <Cross x={1416} from={864} to={1053} color='#9b948b' />
    <Candles data={hourlyCandles} />
    <Rule y={833} from={1852} to={1861} color={colors.ink} />
  </Drawing>
)

const topCharts = [
  { id: 'daily', grow: 171, left: 1, right: 4, chart: DailyChart },
  { id: 'h4', grow: 252, left: 1, right: 6, inset: true, time: 'TR: 3h 29m 14s', pad: 6, chart: FourHourChart },
  { id: 'm30', grow: 354, right: 6, time: 'TR: 29m 14s', pad: 4, chart: HalfHourChart, box: '442 72 354 434', lines: [[766, 73, 182], [740, 153, 179]] },
  { id: 'm15', grow: 566, right: 6, time: 'TR: 14m 14s', pad: 4, chart: QuarterChart, box: '803 72 566 434', lines: [[1289, 73, 108], [1178, 153, 179]] },
  { id: 'tpo', grow: 536, right: 6, inset: true, time: 'TR: 29m 14s', pad: 6, chart: ProfileChart }
]

const leftTimes = [
  ['2026-1-23', 72, 'date'], ['15:32', 45], ['16:17', 46], ['16:49', 44], ['17:12', 45],
  ['17:37', 46], ['18:07', 44], ['18:29', 46], ['18:50', 44], ['19:32', 46], ['20:17', 44],
  ['21:17', 82], ['1-26', 35, 'date'], ['0:12', 37], ['1:05', 28], ['Mon 01-26  02:46', 128, 'cursor'],
  [':34', 27], ['6:53', 53]
]

const rightTimes = [
  ['2026-1-23', 74, 'date'], ['21:15', 61], ['22:00', 75], ['1-26', 40, 'date'], ['0:30', 41],
  ['1:00', 39], ['1:30', 42], ['2', 8], ['Mon 01-26  02:45', 128, 'cursor'], ['30', 22],
  ['4:00', 40], ['4:30', 52], ['5:15', 49], ['6:00', 39], ['6:30', 37], ['7:00', 39],
  ['7:30', 41], ['8:00', 35], ['8:30', 31]
]

const prices = [
  90800, 90400, 90000, 89600, 89200, 88800, 88400, 88000, 87600, 87200, 86800, 86400, 86000, 85600
]

const mainMenu = [
  'File', 'Edit', 'Chart', 'Analysis', 'Tools', 'Spreadsheet', 'Trade', 'Global Settings',
  'Window', 'CB', 'CW', 'Help'
]

const dialogMenu = [
  '[*Symbol]', '[Data Limiting]', '[Bar Period]', '[Session Times]', '[Display]', '[Grid]',
  '[Trading]', '[Linking]', '[Scale]', '[Regions]', '[Market Depth]', '[Chart Drawings]',
  '[Chart Data]', '[Performance]', '[Alert]', 'View'
]

const settings = [
  { section: 'Symbol' },
  { name: 'Symbol (Action)', value: 'BTCF26' },
  { name: 'Trade and Current Quote Symbol (Action)', value: 'MBTF26' },
  { name: 'Use As Trade Only Symbol', value: 'Yes' },
  { name: 'Automatically Rollover Futures Symbol', value: 'No' },
  { name: 'Continuous Contract (List)', value: 'Continuous Futures Contract - Volume Based Rollover, Back Adjusted' },
  {},
  { section: 'Symbol Settings' },
  { name: 'Price Display Format (List)', value: '1' },
  { name: 'Tick Size', value: '5.000000' },
  { name: 'Auto-Set From Data Feed', value: 'No' },
  {},
  { name: 'Real-Time Price Multiplier (List)', value: '1' },
  { name: 'Historical Price Multiplier (List)', value: '1' },
  { name: 'Volume/Open Interest Multiplier (List)', value: '1' },
  { name: 'Volume Value Format (List)', value: '1' },
  { name: 'Currency Value Per Tick', value: '0.500000' },
  { name: 'Invert Prices', value: 'No' },
  { name: 'Do Not Change Symbol Settings for Chart on Symbol Change (Not Recommended)', value: 'No' },
  { name: 'Trade and Current Quote Symbol Price Multiplier (List)', value: '0' },
  {},
  { section: 'Global Symbol Settings' },
  { name: ' (Button)', button: '[Apply Global Symbol Settings]' },
  { name: ' (Button)', button: '[Edit Global Symbol Settings]' }
]

const valueColors = { Yes: 'black', No: '#e00020' }

const RollButton = ({ top, left, right }) => (
  <BannerRow $top={top} $left={left} $right={right}>
    <Banner>[Volume] Symbol needs Rollover. Click to Rollover.</Banner>
  </BannerRow>
)

const Times = ({ items }) => (
  <TimeAxis>
    {items.map(([label, grow, kind]) => {
      if (kind === 'cursor') {
        return <CursorTag key={label} $grow={grow}>{label}</CursorTag>
      }
      return (
        <Slot key={label} $grow={grow}>
          {kind === 'date' ? <DateTag>{label}</DateTag> : label}
        </Slot>
      )
    })}
  </TimeAxis>
)

const SettingRow = ({ section, name, value, button }) => {
  if (section) {
    return <tr><SectionCell colSpan='3' scope='colgroup'>{section}</SectionCell></tr>
  }
  if (!name) {
    return <tr><Cell colSpan='3' /></tr>
  }
  return (
    <tr>
      <Cell>{name}</Cell>
      {button ? (
        <Fragment>
          <Cell $dark><CellButton>{button}</CellButton></Cell>
          <Cell $dark><CellButton>{button}</CellButton></Cell>
        </Fragment>
      ) : (
        <Fragment>
          <Cell $color={valueColors[value]}>{value}</Cell>
          <Cell />
        </Fragment>
      )}
    </tr>
  )
}

const MinimizeIcon = () => (
  <svg width='10' height='10' viewBox='0 0 10 10' shapeRendering='crispEdges'>
    <path d='M0 5.5h10' stroke='currentColor' />
  </svg>
)

const RestoreIcon = () => (
  <svg width='10' height='10' viewBox='0 0 10 10' fill='none' stroke='currentColor' shapeRendering='crispEdges'>
    <path d='M.5 2.5h7v7h-7zM2.5 2.5v-2h7v7h-2' />
  </svg>
)

const MaximizeIcon = () => (
  <svg width='10' height='10' viewBox='0 0 10 10' fill='none' stroke='currentColor' shapeRendering='crispEdges'>
    <path d='M.5 .5h9v9h-9z' />
  </svg>
)

const CloseIcon = () => (
  <svg width='11' height='11' viewBox='0 0 11 11' stroke='currentColor'>
    <path d='M.5 .5l10 10M10.5 .5l-10 10' />
  </svg>
)

const Globe = () => (
  <svg width='16' height='16' viewBox='0 0 16 16' aria-hidden='true'>
    <defs>
      <radialGradient id='globe' cx='0.35' cy='0.3' r='0.8'>
        <stop offset='0' stopColor='#e8f8a0' />
        <stop offset='0.45' stopColor='#6fb52c' />
        <stop offset='1' stopColor='#1f5a1c' />
      </radialGradient>
    </defs>
    <circle cx='8' cy='8' r='7' fill='url(#globe)' />
    <path d='M8 2c3-1 6 1 6.500 5c0 4-2 6-4 7c-1-3 0-4-1-6s-3-2-1.500-6z' fill='#2d7fc8' />
    <path d='M3 5c1-2 3-2 4-1s-1 3-2 4s-2 0-2-3z' fill='#f5fbc8' />
  </svg>
)

const SheetIcon = () => (
  <svg width='15' height='14' viewBox='0 0 15 14' aria-hidden='true'>
    <defs>
      <linearGradient id='sheet' x1='0' y1='0' x2='0.6' y2='1'>
        <stop offset='0' stopColor='#2c5f96' />
        <stop offset='1' stopColor='#4fae74' />
      </linearGradient>
    </defs>
    <path d='M0 0h15v14H0z' fill='#f4f4f4' />
    <path d='M1 2h8v10H1z' fill='url(#sheet)' />
    <path d='M10 2h4v10h-4z' fill='#d5e0ea' />
    <path d='M11 3h2v5h-2z' fill='#4d8f9c' />
  </svg>
)

const SettingsDialog = () => (
  <Dialog role='dialog' aria-label='Chart Settings'>
    <DialogTitle>
      <SheetIcon />
      <DialogName>{'Chart Settings | BTCF26/MBTF26 [CBV]  25 Volume #7 | BITCOIN FUTURES BTC Jan 2026'}</DialogName>
      <WindowButton aria-label='Minimize dialog'><MinimizeIcon /></WindowButton>
      <WindowButton aria-label='Maximize dialog' $color='black'><MaximizeIcon /></WindowButton>
      <WindowButton aria-label='Close dialog' $color='black'><CloseIcon /></WindowButton>
    </DialogTitle>
    <Menu $height={19} $gap={16}>
      {dialogMenu.map(item => <MenuItem key={item} $color='black'>{item}</MenuItem>)}
    </Menu>
    <DialogBody>
      <Search>
        <SearchInput aria-label='Search settings' placeholder='Enter Search Text' />
        <DropButton aria-label='Recent searches'>
          <svg width='7' height='4' viewBox='0 0 7 4'><path d='M0 0h7L3.500 4z' /></svg>
        </DropButton>
      </Search>
      <TableFrame>
        <Table>
          <thead>
            <tr>
              <HeadCell $width='41.1%'>Setting Name</HeadCell>
              <HeadCell $width='47.4%'>Value</HeadCell>
              <HeadCell>Original Value</HeadCell>
            </tr>
          </thead>
          <tbody>
            {settings.map((row, i) => <SettingRow key={i} {...row} />)}
          </tbody>
        </Table>
      </TableFrame>
      <Actions>
        {['OK', 'Cancel', 'Revert All', 'Apply All', 'Help'].map(label => (
          <ActionButton key={label}>{label}</ActionButton>
        ))}
      </Actions>
    </DialogBody>
  </Dialog>
)

const App = () => (
  <Page>
    <GlobalStyle />
    <TitleBar>
      <Globe />
      <Title>{'#2 2026-01-26  08:33:41 Mon [TTF BTCF26/MBTF26 [CBV]  25 Volume #7 L:2 | BITCOIN FUTURES BTC Jan 2026 (Jan26)]'}</Title>
      <WindowButton aria-label='Minimize'><MinimizeIcon /></WindowButton>
      <WindowButton aria-label='Restore'><RestoreIcon /></WindowButton>
      <WindowButton aria-label='Close'><CloseIcon /></WindowButton>
    </TitleBar>
    <Menu $height={17} $gap={15}>
      {mainMenu.map(item => <MenuItem key={item} $color='#6d6d6d'>{item}</MenuItem>)}
    </Menu>
    <Toolbar>
      <ToolButton $width={26} $gap={1} disabled>Con</ToolButton>
      <ToolButton $width={25}>Dis</ToolButton>
      <Status>DF:357818  ST:20, 20  BR:11.43M</Status>
      <ToolButton $width={20}>Sv</ToolButton>
      <ToolButton $width={20}>CC</ToolButton>
      <ToolButton $width={26} $gap={4}>Log</ToolButton>
      <ToolButton $width={20} $gap={4}>YM</ToolButton>
      <ToolButton $width={20} $gap={4} $bg='#d3d3d3'>CL</ToolButton>
      <ToolButton $width={20} $gap={4} $bg='#b9b9b9'>HG</ToolButton>
      <ToolButton $width={20} $gap={4} $bg='#a0a0a0'>6B</ToolButton>
      <ToolButton $width={20} $gap={4} $bg='#868686'>6C</ToolButton>
      <ToolButton $width={20} $bg='#6b6b6b'>BC</ToolButton>
    </Toolbar>
    <Workspace>
      <TopRow>
        {topCharts.map(({ id, grow, left, right, inset, time, pad, chart: Chart, box, lines }) => (
          <ChartPanel key={id} $grow={grow} $inset={inset}>
            <Chart />
            {time && <TimeRemaining $pad={pad}>{time}</TimeRemaining>}
            {id === 'tpo' && <ProfilePrices><span>97075</span><span>95270</span></ProfilePrices>}
            <RollButton top={81} left={left} right={right} />
            {lines && (
              <Drawing box={box}>
                {lines.map(([x, from, to]) => <Cross key={x} x={x} from={from} to={to} />)}
              </Drawing>
            )}
          </ChartPanel>
        ))}
      </TopRow>
      <BottomRow>
        <Trading $grow={969} $frame={colors.frameActive} $side={7} $bottom={7}>
          <PlotArea>
            <VolumeChart />
            <TradeInfo>Trade: 1@85320 RV:22</TradeInfo>
            <Watermark>-&gt;RTH</Watermark>
          </PlotArea>
          <PriceAxis>
            <AxisTag $bg='none' $color={colors.ink} $top={61}>85600</AxisTag>
            <AxisTag $bg={colors.tag} $top={66.5}>88</AxisTag>
            <AxisTag $bg={colors.ink} $top={76}>0</AxisTag>
            <AxisTag $bg={colors.ink} $top={82}>-55</AxisTag>
          </PriceAxis>
          <Times items={leftTimes} />
          <AxisCorner>2 L</AxisCorner>
        </Trading>
        <Trading $grow={949} $frame={colors.frame} $side={6} $bottom={7}>
          <PlotArea>
            <HourlyChart />
            <RollButton top={108} right={0} />
          </PlotArea>
          <PriceAxis>
            {prices.map(price => <Price key={price}>{price}</Price>)}
            <AxisTag $bg={colors.ink} $top={57.7}>87750</AxisTag>
            <AxisTag $bg={colors.tag} $top={97.5}>85395</AxisTag>
          </PriceAxis>
          <Times items={rightTimes} />
          <AxisCorner>3 L</AxisCorner>
        </Trading>
      </BottomRow>
      <SettingsDialog />
    </Workspace>
    <Marks aria-hidden='true' fill='none' stroke='#d01010' strokeWidth='2'>
      <ellipse cx='328' cy='235' rx='59' ry='19' />
      <ellipse cx='753' cy='357' rx='41' ry='22' />
      <ellipse cx='770' cy='1056' rx='71' ry='26' />
    </Marks>
  </Page>
)

export default App
